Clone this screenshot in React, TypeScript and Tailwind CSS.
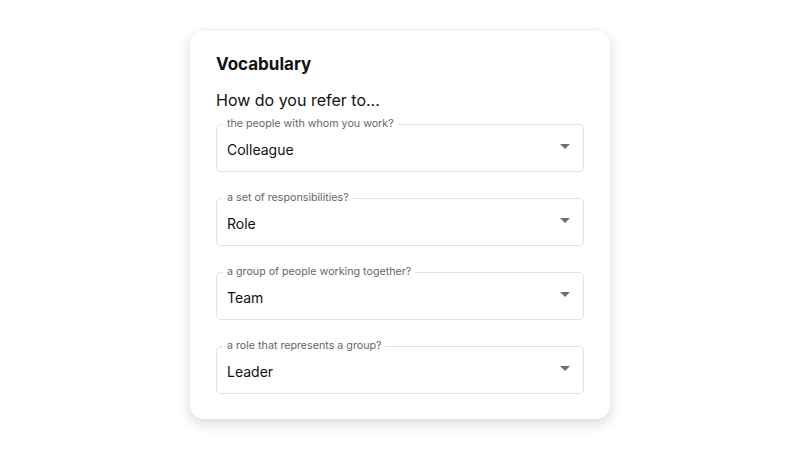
import React from "react";

const fields = [
  { label: "the people with whom you work?", value: "Colleague" },
  { label: "a set of responsibilities?", value: "Role" },
  { label: "a group of people working together?", value: "Team" },
  { label: "a role that represents a group?", value: "Leader" },
];

function SelectField({ label, value }: { label: string; value: string }) {
  return (
    <fieldset className="h-[54px] rounded-[5px] border border-[#e2e2e2] px-[10px]">
      <legend className="ml-[-4px] px-[4px] text-[10.7px] leading-[12px] text-[#666]">{label}</legend>
      <div className="flex h-[39px] items-center justify-between">
        <span className="text-[14px] leading-[20px] text-[#111]">{value}</span>
        <svg width="10" height="5" viewBox="0 0 10 5" className="mb-[7px] mr-[3px]">
          <path d="M0 0h10L5 5z" fill="#6f6f6f" />
        </svg>
      </div>
    </fieldset>
  );
}

export default function App() {
  return (
    <div className="flex min-h-[450px] justify-center bg-white pt-[31px] font-['Inter',sans-serif]">
      <div className="h-fit w-[420px] rounded-[14px] bg-white px-[26px] pb-[25px] pt-[21px] shadow-[0_4px_14px_rgba(0,0,0,0.17)]">
        <h2 className="text-[17px] font-bold leading-[24px] text-[#111]">Vocabulary</h2>
        <p className="mt-[13px] text-[16px] leading-[22px] text-[#111]">How do you refer to...</p>
        <div className="mt-[7px] flex flex-col gap-[20px]">
          {fields.map((f) => (
            <SelectField key={f.label} label={f.label} value={f.value} />
          ))}
        </div>
      </div>
    </div>
  );
}
